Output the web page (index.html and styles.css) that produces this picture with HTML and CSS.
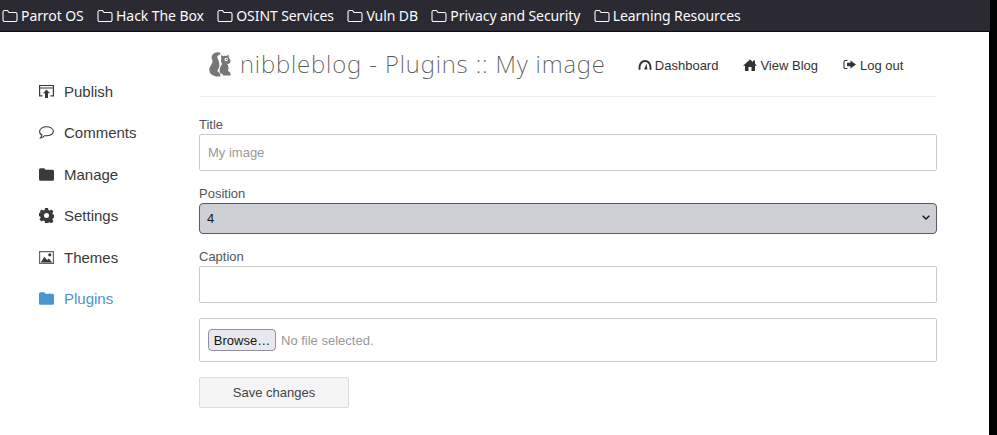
FILE: index.html
```html
<!DOCTYPE html>
<html lang="en">
<head>
<meta charset="utf-8">
<title>nibbleblog - Plugins :: My image</title>
<link rel="stylesheet" href="styles.css">
</head>
<body>
<div class="window">
  <nav class="bookmarks">
    <a class="bm"><svg class="bm-icon" viewBox="0 0 16 14"><path d="M1 3a1.500 1.500 0 0 1 1.500-1.500h3l1.500 2h6.500A1.500 1.500 0 0 1 15 5v6a1.500 1.500 0 0 1-1.500 1.500h-11A1.500 1.500 0 0 1 1 11z"/></svg>Parrot OS</a>
    <a class="bm"><svg class="bm-icon" viewBox="0 0 16 14"><path d="M1 3a1.500 1.500 0 0 1 1.500-1.500h3l1.500 2h6.500A1.500 1.500 0 0 1 15 5v6a1.500 1.500 0 0 1-1.500 1.500h-11A1.500 1.500 0 0 1 1 11z"/></svg>Hack The Box</a>
    <a class="bm"><svg class="bm-icon" viewBox="0 0 16 14"><path d="M1 3a1.500 1.500 0 0 1 1.500-1.500h3l1.500 2h6.500A1.500 1.500 0 0 1 15 5v6a1.500 1.500 0 0 1-1.500 1.500h-11A1.500 1.500 0 0 1 1 11z"/></svg>OSINT Services</a>
    <a class="bm"><svg class="bm-icon" viewBox="0 0 16 14"><path d="M1 3a1.500 1.500 0 0 1 1.500-1.500h3l1.500 2h6.500A1.500 1.500 0 0 1 15 5v6a1.500 1.500 0 0 1-1.500 1.500h-11A1.500 1.500 0 0 1 1 11z"/></svg>Vuln DB</a>
    <a class="bm"><svg class="bm-icon" viewBox="0 0 16 14"><path d="M1 3a1.500 1.500 0 0 1 1.500-1.500h3l1.500 2h6.500A1.500 1.500 0 0 1 15 5v6a1.500 1.500 0 0 1-1.500 1.500h-11A1.500 1.500 0 0 1 1 11z"/></svg>Privacy and Security</a>
    <a class="bm"><svg class="bm-icon" viewBox="0 0 16 14"><path d="M1 3a1.500 1.500 0 0 1 1.500-1.500h3l1.500 2h6.500A1.500 1.500 0 0 1 15 5v6a1.500 1.500 0 0 1-1.500 1.500h-11A1.500 1.500 0 0 1 1 11z"/></svg>Learning Resources</a>
  </nav>
  <div class="page">
    <aside class="side">
      <a class="side-item"><svg class="side-icon" viewBox="0 0 15 15"><path fill-rule="evenodd" d="M0 1h15v11.500h-3.500v-1.200h2.300V4.500H1.200v6.800h2.300v1.200H0zM1.200 2v1.500h12.600V2z"/><path d="M7.500 5.500l3.500 3.700H9V14H6V9.200H4z"/></svg>Publish</a>
      <a class="side-item"><svg class="side-icon" viewBox="0 0 15 15"><path fill="none" stroke="currentColor" stroke-width="1.100" d="M7.500 1.800c3.800 0 6.900 2 6.900 4.500s-3.100 4.500-6.900 4.500c-.6 0-1.200 0-1.800-.1-1 1.100-2.500 2-4.200 2.300 .8-1 1.300-2 1.400-3C1.500 9.600.6 8 .6 6.300c0-2.500 3.100-4.500 6.900-4.500z"/></svg>Comments</a>
      <a class="side-item"><svg class="side-icon" viewBox="0 0 15 15"><path d="M0 2.800a1.500 1.500 0 0 1 1.500-1.500h3.700l1.300 1.500h7A1.500 1.500 0 0 1 15 4.300v8a1.500 1.500 0 0 1-1.500 1.500h-12A1.500 1.500 0 0 1 0 12.300z"/></svg>Manage</a>
      <a class="side-item"><svg class="side-icon" viewBox="0 0 15 15"><path fill-rule="evenodd" d="M6 0h3l.4 2 1.300.5 1.700-1.100 2.100 2.100-1.100 1.700.5 1.300 2 .4v3l-2 .4-.5 1.300 1.100 1.700-2.100 2.100-1.700-1.100-1.300.5L9 15H6l-.4-2-1.300-.5-1.700 1.100-2.100-2.100 1.100-1.700-.5-1.300-2-.4v-3l2-.4.5-1.300L.500 3.500 2.600 1.400l1.700 1.100L5.600 2zM7.500 5a2.500 2.500 0 1 0 0 5 2.500 2.500 0 0 0 0-5z"/></svg>Settings</a>
      <a class="side-item"><svg class="side-icon" viewBox="0 0 15 15"><path fill-rule="evenodd" fill="#666" d="M0 1h15v13H0zm1.200 1.200v10.600h12.600V2.200z"/><path d="M1.800 12.500l3.600-5.800 2.700 3.300 1.700-1.500 3.400 4z"/><circle cx="10.800" cy="4.800" r="1.600"/></svg>Themes</a>
      <a class="side-item active"><svg class="side-icon" viewBox="0 0 15 15"><path d="M0 2.800a1.500 1.500 0 0 1 1.500-1.500h3.700l1.300 1.500h7A1.500 1.500 0 0 1 15 4.300v8a1.500 1.500 0 0 1-1.500 1.500h-12A1.500 1.500 0 0 1 0 12.300z"/></svg>Plugins</a>
    </aside>
    <main class="main">
      <header class="head">
        <h1 class="title"><svg class="logo" viewBox="0 0 22 25"><path d="M10.500 24.500C5 25 .5 22.500.3 18c-.2-3.500 3-5.500 3.200-8.500C3.600 7.500 2 6.500 2.800 4 3.700 1 7.500-.3 10.500.5c1.200.4 1.200 1.800 0 2.300-1.800.7-2.800 1.700-2 3.500 1 2.300 2.200 4.500 1.800 7.700-.2 2-1.300 3.500-2 5 1 .8 2 1.500 2.700 2.500l.5 3z"/><path d="M11.800 21.500c-1.200-1-1.500-2.800-1-4.800.5-2 1.300-3.300 2.500-4.700-1.200-1.200-1.700-3-1-4.800L12 3l2.300 1.300c1-.5 2.200-.6 3.300-.3L19.500 2.500l.3 3.200c1.600 1.500 2.200 3.500 1.300 5-.7 1-1.800 1.200-2.900 1.200 1.400 1.800 1.800 4.500.8 7 1.500.5 2.500 1.800 2.500 3.200v1.400H14l-.5-1.500c-.5-.2-1.200-.3-1.700-.5z"/><circle cx="17.200" cy="7.500" r="1.700" fill="#fff"/><circle cx="17.500" cy="7.500" r=".8"/></svg>nibbleblog - Plugins :: My image</h1>
        <nav class="links">
          <a class="link"><svg class="link-icon" viewBox="0 0 14 12"><path fill="none" stroke="currentColor" stroke-width="1.900" d="M1.700 10.800C.7 6.500 3 2 7 2s6.300 4.500 5.300 8.800"/><path d="M6.200 10.500L8.500 4.500l.9 6z"/></svg>Dashboard</a>
          <a class="link"><svg class="link-icon" viewBox="0 0 14 12"><path d="M7 .500l3 2.600V1.500h2v3.300l2 1.900h-2V12H8.500V8h-3v4H2V6.700H0z"/></svg>View Blog</a>
          <a class="link"><svg class="link-icon" viewBox="0 0 14 12"><path fill="none" stroke="currentColor" stroke-width="1.100" d="M4.500 1.500H2.300A1.300 1.300 0 0 0 1 2.800v5.400a1.300 1.300 0 0 0 1.300 1.300h2.200"/><path d="M7.500 1.500l5.500 4-5.500 4V7.300H4V3.700h3.500z"/></svg>Log out</a>
        </nav>
      </header>
      <form class="form">
        <label class="label" for="title">Title</label>
        <input class="input" id="title" type="text" placeholder="My image">
        <label class="label" for="position">Position</label>
        <div class="select-wrap">
          <select class="select" id="position"><option>4</option></select>
          <svg class="chevron" viewBox="0 0 8 5"><path d="M.700 .700L4 4 7.300 .700"/></svg>
        </div>
        <label class="label" for="caption">Caption</label>
        <input class="input" id="caption" type="text">
        <div class="file-box"><span class="browse">Browse…</span><span class="file-note">No file selected.</span></div>
        <button class="save" type="button">Save changes</button>
      </form>
    </main>
  </div>
</div>
</body>
</html>
```
FILE: styles.css
```css
* { box-sizing: border-box; }
html, body { height: 100%; }
body { margin: 0; background: #000; overflow: hidden; font-family: "Liberation Sans", Arial, sans-serif; }
.window { width: 989px; height: 435px; background: #fff; }
.bookmarks { width: 990px; height: 32px; background: #2b2a33; border-bottom: 1px solid #0c0c0d; display: flex; align-items: center; gap: 13.400px; padding: 0 0 0 2px; color: #fbfbfe; font: 14px/1 "Noto Sans", sans-serif; letter-spacing: -0.080px; }
.bm { display: flex; align-items: center; gap: 3px; }
.bm-icon { width: 16px; height: 14px; fill: none; stroke: #fbfbfe; stroke-width: 1.100; }
.page { display: flex; }
.side { width: 199px; padding: 38.400px 0 0 39px; }
.side-item { display: flex; align-items: center; gap: 10px; height: 41.500px; font-size: 15px; color: #3a3a3a; }
.side-item.active { color: #4a94d6; }
.side-icon { width: 15px; height: 15px; fill: currentColor; flex: none; }
.main { width: 738px; }
.head { height: 65px; display: flex; align-items: flex-start; border-bottom: 1px solid #eee; padding: 0 0 0 10px; }
.title { margin: 15px 0 0; display: flex; align-items: center; font: 200 24px/34px "Noto Sans", sans-serif; letter-spacing: 0.880px; color: #555; white-space: nowrap; }
.logo { width: 22px; height: 25px; fill: #777; margin-right: 9px; flex: none; }
.links { display: flex; margin: 26px 0 0 32px; gap: 25px; font-size: 13px; line-height: 16px; color: #333; }
.link { display: flex; align-items: center; gap: 3px; }
.link-icon { width: 14px; height: 12px; fill: currentColor; margin-top: -2px; }
.form { display: flex; flex-direction: column; align-items: flex-start; padding-top: 20px; }
.label { font-size: 13px; line-height: 16px; color: #555; margin-bottom: 1px; }
.input { width: 738px; height: 37px; border: 1px solid #ccc; border-radius: 2px; padding: 0 8px; margin-bottom: 15px; font: 13px "Liberation Sans", sans-serif; color: #333; background: #fff; outline: none; }
.input::placeholder { color: #999; opacity: 1; }
.select-wrap { position: relative; width: 738px; height: 31px; margin-bottom: 15px; }
.select { appearance: none; display: block; width: 100%; height: 100%; padding: 0 7px; border: 1px solid #5b5b66; border-radius: 4px; background: #cfd0d5; font: 13px "Liberation Sans", sans-serif; color: #15141a; }
.chevron { position: absolute; right: 7px; top: 12px; width: 8px; height: 5px; fill: none; stroke: #15141a; stroke-width: 1.400; }
.file-box { width: 738px; height: 44px; border: 1px solid #ccc; border-radius: 2px; display: flex; align-items: center; padding-left: 8px; gap: 5px; margin-bottom: 15px; font-size: 13px; }
.browse { height: 22px; width: 68px; display: flex; align-items: center; justify-content: center; border: 1px solid #8f8f9d; border-radius: 4px; background: #e9e9ed; color: #15141a; }
.file-note { color: #999; }
.save { width: 150px; height: 31px; border: 1px solid #ddd; border-radius: 2px; background: #f5f5f5; color: #444; font: 13px "Liberation Sans", sans-serif; padding: 0; }
```
